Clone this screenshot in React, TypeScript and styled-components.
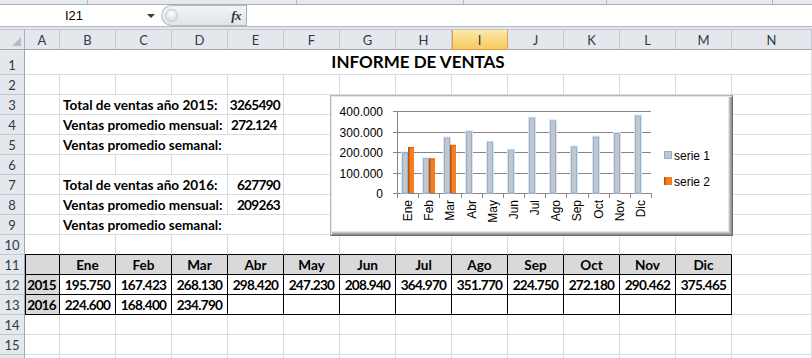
import React from 'react';
import styled, { createGlobalStyle } from 'styled-components';

const GlobalStyle = createGlobalStyle`
  html, body { margin: 0; padding: 0; background: #ffffff; }
  body { font-family: Lato, "Liberation Sans", sans-serif; }
`;

const COLS = ['A', 'B', 'C', 'D', 'E', 'F', 'G', 'H', 'I', 'J', 'K', 'L', 'M', 'N'];
const MONTHS = ['Ene', 'Feb', 'Mar', 'Abr', 'May', 'Jun', 'Jul', 'Ago', 'Sep', 'Oct', 'Nov', 'Dic'];
const V2015 = [195750, 167423, 268130, 298420, 247230, 208940, 364970, 351770, 224750, 272180, 290462, 375465];
const V2016 = [224600, 168400, 234790];
const fmt = (v: number) => {
  const s = String(v);
  return s.slice(0, s.length - 3) + '.' + s.slice(-3);
};

/* ---------- window chrome ---------- */
const Window = styled.div`
  width: 812px;
  height: 358px;
  overflow: hidden;
  display: flex;
  flex-direction: column;
  background: #ffffff;
`;

const RibbonEdge = styled.div`
  display: flex;
  height: 4px;
  flex-shrink: 0;
  background: #e6e9ed;
  border-bottom: 1px solid #a8aeb6;
`;

const RibbonGroup = styled.div<{ $w: number }>`
  width: ${p => p.$w}px;
  flex-shrink: 0;
  box-sizing: border-box;
  border-right: 1px solid #b3b9c1;
`;

const FormulaBar = styled.div`
  display: flex;
  height: 22px;
  flex-shrink: 0;
  box-sizing: border-box;
  background: #ffffff;
  border-bottom: 1px solid #b1b8c1;
`;

const NameBox = styled.div`
  width: 160px;
  flex-shrink: 0;
  display: flex;
  align-items: center;
  padding-right: 5px;
  box-sizing: border-box;
`;

const NameText = styled.span`
  flex: 1;
  text-align: center;
  font: 13px "Liberation Sans", Arial, sans-serif;
  color: #000;
  padding-left: 1px;
`;

const DropArrow = styled.span`
  width: 0;
  height: 0;
  border-left: 4px solid transparent;
  border-right: 4px solid transparent;
  border-top: 4px solid #3a3a3a;
`;

const FxPill = styled.div`
  width: 85px;
  flex-shrink: 0;
  margin: 0 0 0 1px;
  box-sizing: border-box;
  display: flex;
  align-items: center;
  justify-content: space-between;
  padding: 0 5px 0 3px;
  background: linear-gradient(#f3f4f6, #e1e4e8);
  border: 1px solid #b4bac2;
  border-right: none;
  border-radius: 11px 0 0 11px;
`;

const Knob = styled.span`
  width: 11px;
  height: 11px;
  border-radius: 50%;
  background: radial-gradient(circle at 50% 35%, #ffffff, #cfd3d8);
  border: 1px solid #c4c8ce;
`;

const FxLabel = styled.span`
  font: italic 700 13px "Liberation Serif", "Times New Roman", serif;
  color: #333;
  letter-spacing: -0.5px;
`;

const FormulaInput = styled.div`
  flex: 1;
  background: #ffffff;
  border-left: 1px solid #a9b0b9;
`;

const BarGap = styled.div`
  height: 2px;
  flex-shrink: 0;
  background: #e3e6ea;
  border-bottom: 1px solid #c3c8ce;
`;

/* ---------- sheet ---------- */
const SheetArea = styled.div`
  position: relative;
  flex: 1;
  overflow: hidden;
`;

const Sheet = styled.div`
  display: grid;
  grid-template-columns: 25px 35px repeat(12, 56px) 80px;
  grid-template-rows: 20px 25px repeat(15, 20px);
`;

const Corner = styled.div`
  box-sizing: border-box;
  display: flex;
  align-items: flex-end;
  justify-content: flex-end;
  padding: 0 3px 3px 0;
  background: #e4e7eb;
  border-right: 1px solid #a9b0b8;
  border-bottom: 1px solid #9ea6b0;
`;

const ColHeader = styled.div<{ $sel?: boolean }>`
  box-sizing: border-box;
  display: flex;
  align-items: center;
  justify-content: center;
  font: 400 13px/18px Lato, sans-serif;
  color: #2f3a47;
  padding-top: 1px;
  background: ${p => (p.$sel ? 'linear-gradient(#fde9a9, #f6c95f)' : '#e4e7eb')};
  border-right: 1px solid ${p => (p.$sel ? '#e2a43f' : '#c3c8ce')};
  border-bottom: 1px solid ${p => (p.$sel ? '#e2a43f' : '#9ea6b0')};
  box-shadow: ${p => (p.$sel ? 'inset 1px 0 0 #e2a43f' : 'none')};
`;

const RowHeader = styled.div`
  box-sizing: border-box;
  display: flex;
  align-items: flex-end;
  justify-content: center;
  font: 400 13px/18px Lato, sans-serif;
  color: #2f3a47;
  background: #e4e7eb;
  border-right: 1px solid #9ea6b0;
  border-bottom: 1px solid #c3c8ce;
`;

type Align = 'left' | 'center' | 'right';

const Cell = styled.div<{
  $span: number;
  $align: Align;
  $fill: boolean;
  $table: boolean;
  $tableTop: boolean;
  $tableLeft: boolean;
  $title: boolean;
}>`
  grid-column: span ${p => p.$span};
  min-width: 0;
  box-sizing: border-box;
  display: flex;
  align-items: ${p => (p.$title ? 'center' : 'flex-end')};
  justify-content: ${p => (p.$align === 'left' ? 'flex-start' : p.$align === 'right' ? 'flex-end' : 'center')};
  padding: 0 3px 0 3px;
  white-space: nowrap;
  overflow: ${p => (p.$title ? 'visible' : 'hidden')};
  font: 700 ${p => (p.$title ? '17px/20px' : '13.6px/17px')} Lato, sans-serif;
  color: #000;
  background: ${p => (p.$fill ? '#d9d9d9' : '#ffffff')};
  border-right: 1px solid ${p => (p.$table ? '#000' : '#dadcdd')};
  border-bottom: 1px solid ${p => (p.$table || p.$tableTop ? '#000' : '#dadcdd')};
  box-shadow: ${p => (p.$tableLeft ? 'inset 1px 0 0 #000' : 'none')};
`;

const Num = styled.span<{ $tight?: boolean }>`
  letter-spacing: ${p => (p.$tight ? '-0.7px' : '0')};
`;

/* ---------- chart ---------- */
const ChartFrame = styled.div`
  position: absolute;
  left: 330px;
  top: 65px;
  width: 403px;
  height: 141px;
  box-sizing: border-box;
  background: #ffffff;
  border-top: 1px solid #b8b8b8;
  border-left: 1px solid #b8b8b8;
  border-right: 1px solid #6e6e6e;
  border-bottom: 1px solid #6e6e6e;
  box-shadow: inset 1px 1px 0 #e6e6e6, inset -1px -1px 0 #8c8c8c, inset -2px -2px 0 #a6a6a6,
    inset -3px -3px 0 #c6c6c6, inset -4px -4px 0 #e4e4e4;
`;

const ChartSvg = styled.svg`
  display: block;
  font-family: "Liberation Sans", Arial, sans-serif;
`;

const AX = 66;
const AR = 320;
const Y0 = 97;
const YT = 15;
const CAT = (AR - AX) / 12;
const yFor = (v: number) => Y0 - (v / 400000) * (Y0 - YT);

function SalesChart() {
  const grid = [0, 1, 2, 3, 4].map(k => Math.round(yFor(k * 100000)) + 0.5);
  return (
    <ChartFrame>
      <ChartSvg width={401} height={139} viewBox="0 0 401 139">
        {grid.map((y, k) => (
          <g key={k}>
            <line x1={AX - 4} x2={AR} y1={y} y2={y} stroke="#868686" strokeWidth={1} />
            <text x={52} y={y + 4.5} fontSize={12} textAnchor="end" fill="#000">
              {k === 0 ? '0' : `${k}00.000`}
            </text>
          </g>
        ))}
        <line x1={AX + 0.5} x2={AX + 0.5} y1={grid[4]} y2={Y0 + 5} stroke="#868686" />
        {Array.from({ length: 13 }, (_, i) => {
          const x = Math.round(AX + i * CAT) + 0.5;
          return <line key={i} x1={x} x2={x} y1={Y0} y2={Y0 + 5} stroke="#868686" />;
        })}
        {V2015.map((v, i) => {
          const x0 = Math.round(AX + i * CAT + 5);
          const top = yFor(v);
          return (
            <g key={i}>
              <rect x={x0 - 0.5} y={top - 1} width={7} height={Y0 - top + 1} fill="none" stroke="#dbe5f1" />
              <rect x={x0 + 0.5} y={top} width={5} height={Y0 - top} fill="#c6c6c6" stroke="#8eb0dc" />
            </g>
          );
        })}
        {V2016.map((v, i) => {
          const x0 = Math.round(AX + i * CAT + 5) + 6;
          const top = yFor(v);
          return (
            <g key={i}>
              <rect x={x0} y={top} width={6} height={Y0 - top} fill="#f57d22" />
              <rect x={x0} y={top} width={1.5} height={Y0 - top} fill="#b85410" />
              <rect x={x0} y={top} width={6} height={1} fill="#d8661a" />
            </g>
          );
        })}
        {MONTHS.map((m, i) => {
          const cx = AX + i * CAT + CAT / 2;
          return (
            <text
              key={m}
              transform={`translate(${cx + 4.5},${Y0 + 7}) rotate(-90)`}
              fontSize={12}
              textAnchor="end"
              fill="#000"
            >
              {m}
            </text>
          );
        })}
        <rect x={333.5} y={55.5} width={7} height={7} fill="#c6c6c6" stroke="#8eb0dc" />
        <text x={343} y={63.5} fontSize={12} fill="#000">serie 1</text>
        <rect x={333} y={81} width={8} height={8} fill="#f57d22" />
        <rect x={333} y={81} width={1.5} height={8} fill="#b85410" />
        <text x={343} y={89.5} fontSize={12} fill="#000">serie 2</text>
      </ChartSvg>
    </ChartFrame>
  );
}

/* ---------- data ---------- */
type Spec = {
  col: number;
  span?: number;
  text?: string;
  align?: Align;
  fill?: boolean;
  title?: boolean;
  tight?: boolean;
};

const ROW_SPECS: Record<number, Spec[]> = {
  1: [{ col: 1, span: 14, text: 'INFORME DE VENTAS', title: true }],
  3: [
    { col: 2, span: 3, text: 'Total de ventas año 2015:', align: 'left' },
    { col: 5, text: '3265490', align: 'right', tight: true },
  ],
  4: [
    { col: 2, span: 3, text: 'Ventas promedio mensual:', align: 'left' },
    { col: 5, text: '272.124', align: 'left', tight: true },
  ],
  5: [{ col: 2, span: 4, text: 'Ventas promedio semanal:', align: 'left' }],
  7: [
    { col: 2, span: 3, text: 'Total de ventas año 2016:', align: 'left' },
    { col: 5, text: '627790', align: 'right', tight: true },
  ],
  8: [
    { col: 2, span: 3, text: 'Ventas promedio mensual:', align: 'left' },
    { col: 5, text: '209263', align: 'right', tight: true },
  ],
  9: [{ col: 2, span: 4, text: 'Ventas promedio semanal:', align: 'left' }],
  11: [{ col: 1, fill: true }, ...MONTHS.map((m, i) => ({ col: i + 2, text: m, fill: true }))],
  12: [
    { col: 1, text: '2015', fill: true, align: 'right' as Align, tight: true },
    ...V2015.map((v, i) => ({ col: i + 2, text: fmt(v), tight: true })),
  ],
  13: [
    { col: 1, text: '2016', fill: true, align: 'right' as Align, tight: true },
    ...V2016.map((v, i) => ({ col: i + 2, text: fmt(v), tight: true })),
  ],
};

function buildRow(r: number): Spec[] {
  const specs = ROW_SPECS[r] ?? [];
  const out: Spec[] = [];
  let c = 1;
  while (c <= 14) {
    const s = specs.find(x => x.col === c);
    if (s) {
      out.push(s);
      c += s.span ?? 1;
    } else {
      out.push({ col: c });
      c += 1;
    }
  }
  return out;
}

const ROWS = Array.from({ length: 16 }, (_, i) => i + 1);

export default function App() {
  return (
    <>
      <GlobalStyle />
      <Window>
        <RibbonEdge>
          {[88, 209, 167, 143, 166].map((w, i) => (
            <RibbonGroup key={i} $w={w} />
          ))}
        </RibbonEdge>
        <FormulaBar>
          <NameBox>
            <NameText>I21</NameText>
            <DropArrow />
          </NameBox>
          <FxPill>
            <Knob />
            <FxLabel>fx</FxLabel>
          </FxPill>
          <FormulaInput />
        </FormulaBar>
        <BarGap />
        <SheetArea>
          <Sheet>
            <Corner>
              <svg width="9" height="9" viewBox="0 0 9 9">
                <polygon points="9,0 9,9 0,9" fill="#b6bcc4" />
              </svg>
            </Corner>
            {COLS.map(c => (
              <ColHeader key={c} $sel={c === 'I'}>
                {c}
              </ColHeader>
            ))}
            {ROWS.map(r => (
              <React.Fragment key={r}>
                <RowHeader>{r <= 15 ? r : null}</RowHeader>
                {buildRow(r).map(s => {
                  const inTable = r >= 11 && r <= 13 && s.col <= 13;
                  return (
                    <Cell
                      key={s.col}
                      $span={s.span ?? 1}
                      $align={s.align ?? 'center'}
                      $fill={!!s.fill}
                      $table={inTable}
                      $tableTop={r === 10 && s.col <= 13}
                      $tableLeft={inTable && s.col === 1}
                      $title={!!s.title}
                    >
                      {s.text ? <Num $tight={s.tight}>{s.text}</Num> : null}
                    </Cell>
                  );
                })}
              </React.Fragment>
            ))}
          </Sheet>
          <SalesChart />
        </SheetArea>
      </Window>
    </>
  );
}
